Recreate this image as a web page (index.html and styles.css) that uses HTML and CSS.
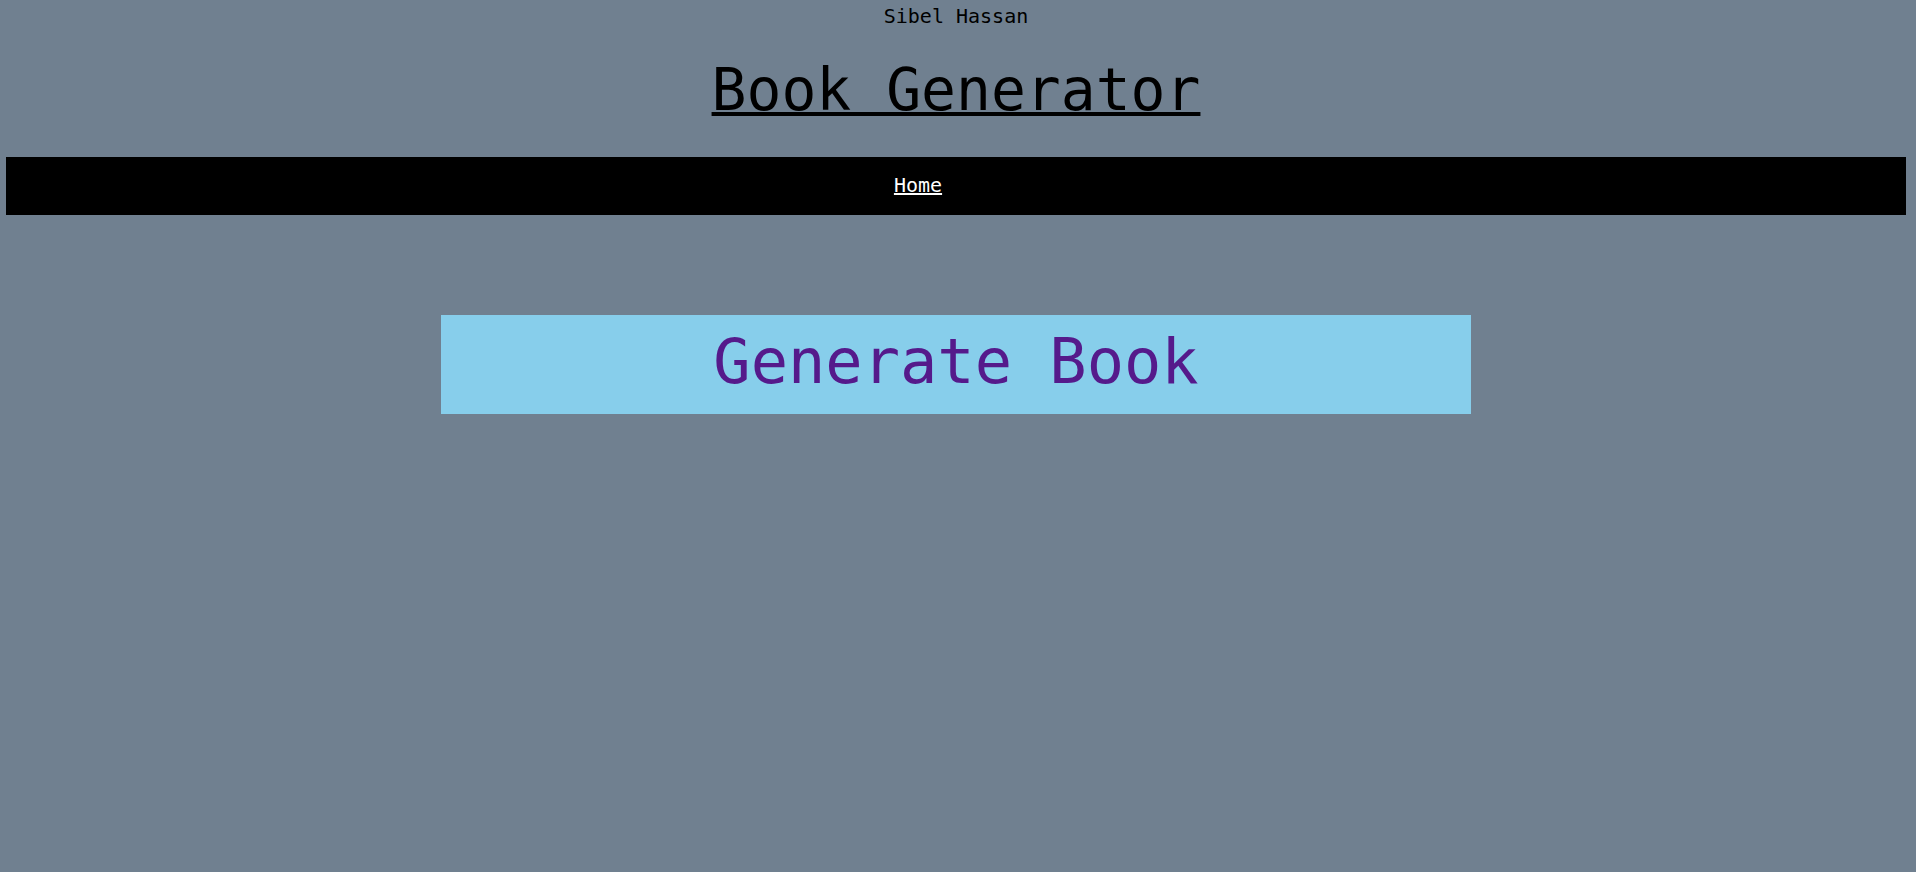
FILE: index.html
```html
<!DOCTYPE html>
<html lang="en">
<head>
<meta charset="utf-8">
<title>Book Generator</title>
<link rel="stylesheet" href="styles.css">
</head>
<body>
<div class="page">
  <header class="header">
    <p class="author">Sibel Hassan</p>
    <h1 class="title">Book Generator</h1>
  </header>
  <nav class="nav">
    <a class="nav-link" href="#">Home</a>
  </nav>
  <main class="main">
    <a class="generate" href="#">Generate Book</a>
  </main>
</div>
</body>
</html>
```
FILE: styles.css
```css
html, body {
  margin: 0;
  padding: 0;
  background: #708090;
  font-family: "DejaVu Sans Mono", "Liberation Mono", monospace;
  color: #000;
}

.page {
  padding: 0 10px 0 6px;
  min-height: 872px;
  box-sizing: border-box;
}

.header {
  display: flex;
  flex-direction: column;
  align-items: center;
  padding-top: 4px;
}

.author {
  margin: 0;
  font-size: 20px;
  line-height: 24px;
}

.title {
  margin: 29px 0 0;
  font-size: 58px;
  line-height: 66px;
  font-weight: normal;
  text-decoration: underline;
  text-decoration-thickness: 4px;
  text-underline-offset: 2px;
}

.nav {
  margin-top: 34px;
  height: 58px;
  background: #000;
  display: flex;
  align-items: center;
  justify-content: center;
  padding-right: 76px;
}

.nav-link {
  color: #fff;
  font-size: 20px;
  line-height: 24px;
  margin-top: -3px;
  text-decoration: underline;
  text-decoration-thickness: 2px;
}

.main {
  display: flex;
  justify-content: center;
  padding-top: 100px;
}

.generate {
  display: block;
  width: 1030px;
  box-sizing: border-box;
  padding: 12px 0 17px;
  background: #87ceeb;
  color: #551a8b;
  font-size: 62px;
  line-height: 70px;
  text-align: center;
  text-decoration: none;
}
```
